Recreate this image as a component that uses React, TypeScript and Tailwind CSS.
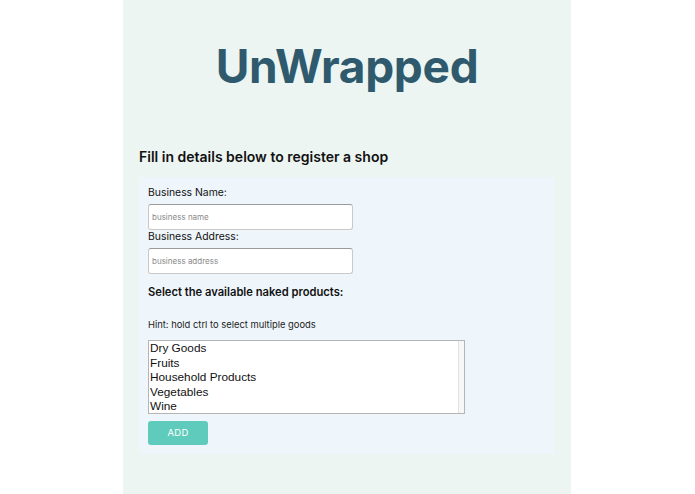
import React from "react";

export default function App() {
  const items = ["Dry Goods", "Fruits", "Household Products", "Vegetables", "Wine"];
  return (
    <div className="w-[695px] h-[494px] bg-white flex justify-center" style={{ fontFamily: "Inter, 'Noto Sans', sans-serif" }}>
      <div className="w-[448px] h-full bg-[#edf5f2] flex flex-col ml-[-1px]">
        <h1 className="text-center text-[46px] font-bold text-[#2f5a6e] tracking-[-0.3px] leading-[46px] mt-[43px]">UnWrapped</h1>
        <h2 className="mt-[60px] ml-[16px] text-[14px] font-semibold text-[#111] leading-[16px]">Fill in details below to register a shop</h2>
        <div className="mt-[12px] mx-[16px] w-[415px] h-[277px] bg-[#eff6fb] pl-[9px] pt-[9px] flex flex-col">
          <label className="text-[10.4px] text-[#111] leading-[14px]">Business Name:</label>
          <input
            placeholder="business name"
            className="mt-[4px] w-[205px] h-[26px] bg-white border border-[#c9c9c9] border-t-[#9a9a9a] rounded-[3px] pl-[3px] text-[8px] placeholder:text-[#8a8a8a] outline-none"
          />
          <label className="text-[10.4px] text-[#111] leading-[14px]">Business Address:</label>
          <input
            placeholder="business address"
            className="mt-[4px] w-[205px] h-[26px] bg-white border border-[#c9c9c9] border-t-[#9a9a9a] rounded-[3px] pl-[3px] text-[8px] placeholder:text-[#8a8a8a] outline-none"
          />
          <div className="mt-[11px] text-[11.2px] font-semibold text-[#111] leading-[14px]">Select the available naked products:</div>
          <div className="mt-[20px] text-[9.4px] text-[#222] leading-[12px]">Hint: hold ctrl to select multiple goods</div>
          <div className="mt-[9px] w-[317px] h-[74px] bg-white border border-[#b5b5b5] flex">
            <div className="flex-1 pl-[1px]" style={{ fontFamily: "'Liberation Sans', Arial, sans-serif" }}>
              {items.map((t) => (
                <div key={t} className="text-[11.8px] leading-[14.6px] text-[#111]">{t}</div>
              ))}
            </div>
            <div className="w-[6px] bg-[#f7f7f7] border-l border-[#e2e2e2]" />
          </div>
          <button className="mt-[7px] w-[60px] h-[24px] bg-[#5fcbbc] rounded-[3px] text-white text-[9.5px] tracking-[0.3px]">ADD</button>
        </div>
      </div>
    </div>
  );
}
